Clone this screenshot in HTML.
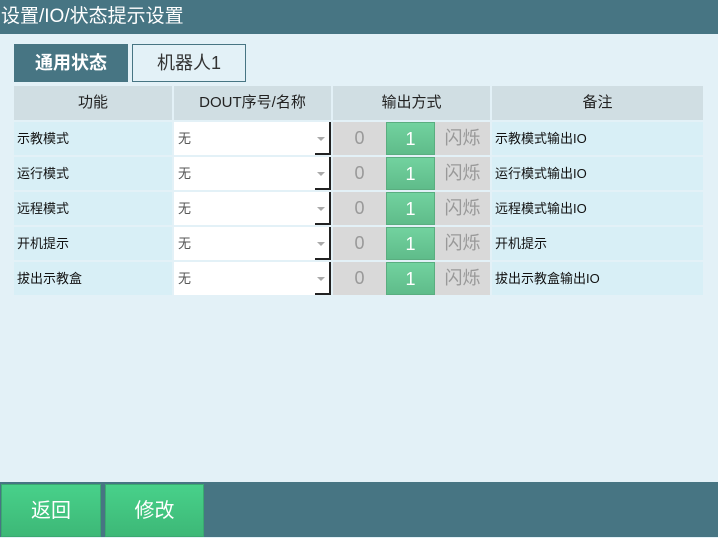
<!DOCTYPE html>
<html><head><meta charset="utf-8"><style>
*{margin:0;padding:0;box-sizing:border-box}
body{width:718px;height:537px;overflow:hidden;background:#e3f1f7;font-family:"Liberation Sans","Noto Sans CJK SC",sans-serif;position:relative}
.a{position:absolute}
#title{left:0;top:0;width:718px;height:34px;background:#477583;color:#fff;font-size:19px;line-height:34px;padding-left:1px}
.tab{top:44px;height:38px;width:114px;font-size:18px;line-height:38px;text-align:center}
.hd{top:86px;height:34px;background:#d0dee3;font-size:15px;line-height:34px;text-align:center;color:#222}
.c{background:#d8eff6;font-size:13px;color:#111;line-height:33px;padding-left:3px;height:33px}
.sel{background:#fff;height:33px;font-size:13px;color:#555;line-height:33px;padding-left:4px}
.sel:after{content:"";position:absolute;right:0;top:0;width:2px;height:33px;background:#222}
.sel i{position:absolute;right:0;bottom:0;width:16px;height:2px;background:#222}
.sel b{position:absolute;right:6px;top:15px;border-left:4px solid transparent;border-right:4px solid transparent;border-top:4px solid #aaa}
.g{background:#d9d9d9;color:#999;font-size:18px;text-align:center;line-height:33px;height:33px}
.gr{background:linear-gradient(#72d29f,#5fbc8a);color:#fff;font-size:18px;text-align:center;line-height:33px;height:33px;border:1px solid #5aae80}
#bot{left:0;top:482px;width:718px;height:55px;background:#477583}
.btn{top:484px;height:53px;background:linear-gradient(#48d18a,#3db877);color:#fff;font-size:20px;text-align:center;line-height:53px;border:1px solid #3aa970}
</style></head><body>
<div id="title" class="a">设置/IO/状态提示设置</div>
<div class="a tab" style="left:14px;background:#477583;color:#fff;font-weight:bold">通用状态</div>
<div class="a tab" style="left:132px;border:1px solid #477583;color:#333;line-height:36px">机器人1</div>
<div class="a hd" style="left:14px;width:158px">功能</div>
<div class="a hd" style="left:174px;width:157px">DOUT序号/名称</div>
<div class="a hd" style="left:333px;width:157px">输出方式</div>
<div class="a hd" style="left:492px;width:211px">备注</div>
<div id="rows"></div>
<div id="bot" class="a"></div>
<div class="a btn" style="left:1px;width:100px">返回</div>
<div class="a btn" style="left:105px;width:99px">修改</div>
<script>
var d=[["示教模式","示教模式输出IO"],["运行模式","运行模式输出IO"],["远程模式","远程模式输出IO"],["开机提示","开机提示"],["拔出示教盒","拔出示教盒输出IO"]];
var h="";
d.forEach(function(r,i){var y=122+i*35;
h+='<div class="a c" style="left:14px;top:'+y+'px;width:158px">'+r[0]+'</div>';
h+='<div class="a sel" style="left:174px;top:'+y+'px;width:157px">无<b></b><i></i></div>';
h+='<div class="a g" style="left:333px;top:'+y+'px;width:53px">0</div>';
h+='<div class="a gr" style="left:386px;top:'+y+'px;width:49px">1</div>';
h+='<div class="a g" style="left:435px;top:'+y+'px;width:55px">闪烁</div>';
h+='<div class="a c" style="left:492px;top:'+y+'px;width:211px">'+r[1]+'</div>';
});
document.getElementById("rows").outerHTML=h;
</script>
</body></html>
